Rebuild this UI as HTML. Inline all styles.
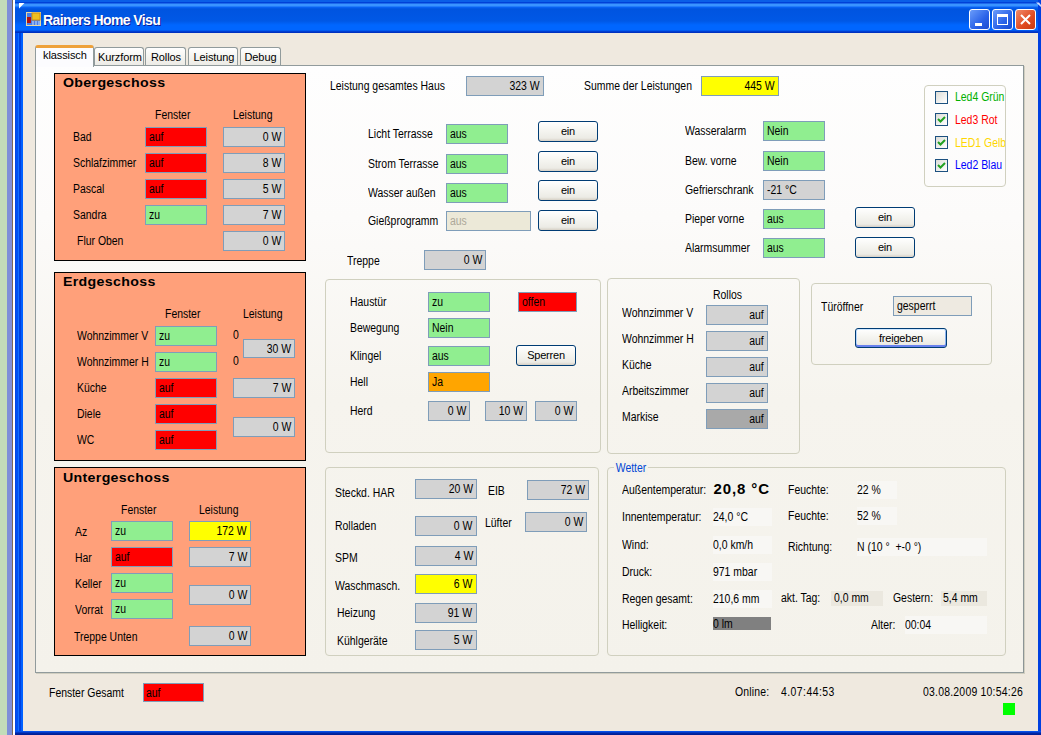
<!DOCTYPE html>
<html><head><meta charset="utf-8"><title>Rainers Home Visu</title>
<style>
*{box-sizing:border-box}
html,body{margin:0;padding:0}
body{width:1041px;height:735px;overflow:hidden;position:relative;background:#c3dcb9;font-family:"Liberation Sans",sans-serif;font-size:11px;color:#000}
.desk1{position:absolute;left:7px;top:0;width:5px;height:735px;background:#7f8fd8}
.desk2{position:absolute;left:12px;top:0;width:1px;height:735px;background:#7a6a5a}
.desk3{position:absolute;left:13px;top:0;width:2px;height:735px;background:#fff}
.frame{position:absolute;left:15px;top:0;width:1026px;height:735px;background:linear-gradient(90deg,#0040e0 0,#0050f0 1px,#0050f0 3px,#1070ff 3px,#1070ff 4px,#0040e0 4px,#0040e0 6px,#0060ff 6px,#0060ff 8px,transparent 8px)}
.frameR{position:absolute;left:1038px;top:0;width:3px;height:735px;background:#0040e0}
.title{position:absolute;left:15px;top:0;width:1026px;height:33px;background:linear-gradient(180deg,#0a5ee8 0,#0a5ee8 2px,#0040d8 2px,#0040d8 3px,#3a93ff 4px,#3a93ff 6px,#0a64f8 7px,#0054e0 9px,#0058e6 21px,#0066ff 25px,#0066ff 30px,#0030c0 32px,#0030c0 33px)}
.content{position:absolute;left:23px;top:33px;width:1015px;height:698px;background:#efe9df}
.bottom{position:absolute;left:15px;top:731px;width:1026px;height:4px;background:linear-gradient(180deg,#0858f0 0,#0848e0 1px,#0028a8 2px,#001c90 4px)}
.ttxt{position:absolute;left:43px;top:12px;font-size:14px;line-height:17px;font-weight:bold;color:#fff;letter-spacing:-0.6px;text-shadow:1px 1px 0 #0a1e9a}
.tabpage{position:absolute;left:35px;top:65px;width:989px;height:608px;border:1px solid #919b9c;border-right-color:#8c9596;background:linear-gradient(180deg,#fefefe 0,#fcfbfa 25%,#f6f4ee 55%,#f4f2eb 100%);box-shadow:1px 1px 0 #d0cec0}
.tab{position:absolute;border:1px solid #919b9c;border-bottom:none;border-radius:3px 3px 0 0;background:linear-gradient(180deg,#fff 0,#f4f3ee 60%,#ecebe6 100%);font-size:11px;line-height:14px;white-space:nowrap;letter-spacing:-0.1px}
.tab.sel{background:#fcfcfe;border-top:3px solid #f5b041;border-color:#eea13a #919b9c #919b9c #919b9c;z-index:3}
.pnl{position:absolute;background:#ffa07a;border:1px solid #000}
.ttl{position:absolute;font-size:13px;font-weight:bold;letter-spacing:0.3px;white-space:nowrap;line-height:16px;transform:scaleX(1.09);transform-origin:0 0}
.l{position:absolute;white-space:nowrap;line-height:14px;font-size:12px;transform:scaleX(0.87);transform-origin:0 0}
.tb{position:absolute;border:1px solid #7f9db9;white-space:nowrap;overflow:hidden}
.tb span{position:absolute;left:2.5px;top:2px;font-size:12px;line-height:14px;transform:scaleX(0.87);transform-origin:0 0}
.tb.r span{left:auto;right:3px;transform-origin:100% 0}
.btn{position:absolute;border:1px solid #003c74;border-radius:3px;background:linear-gradient(180deg,#fff 0,#f6f6f2 40%,#ecebe5 85%,#d6d0c5 100%);text-align:center;line-height:19px;white-space:nowrap;letter-spacing:-0.2px}
.btn.def{box-shadow:inset 0 1px 0 #cee7ff,inset 0 -2px 0 #6982ee,inset 1px 0 0 #b8d7fd,inset -1px 0 0 #8cb4f2;line-height:18px}
.grp{position:absolute;border:1px solid #d0d0bf;border-radius:4px}
.cb{position:absolute;width:13px;height:13px;border:1px solid #1c5180;background:linear-gradient(135deg,#dcdcd7,#fff);padding:0}
.cb svg{position:absolute;left:0;top:0}
.vb{position:absolute}
.big{position:absolute;font-size:15px;font-weight:bold;letter-spacing:0.9px;white-space:nowrap;line-height:18px}
</style></head><body>
<div class="desk1"></div><div class="desk2"></div><div class="desk3"></div>
<div class="frame"></div>
<div class="title"></div>
<div class="frameR"></div>
<div class="content"></div>
<div class="bottom"></div>
<svg style="position:absolute;left:19px;top:3px" width="6" height="6"><path d="M0 0 H5.5 L0 5.5 Z" fill="#fff"/></svg>
<svg style="position:absolute;left:1036px;top:2px" width="5" height="6"><path d="M0 0.5 L3 0.5 L5 3 L5 5 Z" fill="#cfe0ff"/></svg>
<svg style="position:absolute;left:26px;top:12px" width="15" height="14" viewBox="0 0 15 14">
<rect x="0" y="0" width="15" height="14" fill="#4a7ee8"/>
<rect x="0.5" y="0.5" width="14" height="13" fill="none" stroke="#e8d8a0" stroke-width="1"/>
<rect x="6" y="1" width="8" height="7" fill="#f0c020" stroke="#d09010"/>
<rect x="1" y="5" width="4" height="6" fill="#b01010"/>
<rect x="6" y="9" width="2" height="4" fill="#8ab0f0"/><rect x="9" y="9" width="2" height="4" fill="#8ab0f0"/><rect x="12" y="9" width="2" height="4" fill="#8ab0f0"/>
</svg>
<div class="ttxt">Rainers Home Visu</div>
<div style="position:absolute;left:969px;top:9px;width:21px;height:21px;border:1px solid #fff;border-radius:3px;background:linear-gradient(135deg,#6a9cfa,#2a62e8 60%,#1a4ad0)"><div style="position:absolute;left:5px;top:13px;width:7px;height:3px;background:#fff"></div></div>
<div style="position:absolute;left:992px;top:9px;width:21px;height:21px;border:1px solid #fff;border-radius:3px;background:linear-gradient(135deg,#6a9cfa,#2a62e8 60%,#1a4ad0)"><div style="position:absolute;left:4px;top:4px;width:11px;height:11px;border:1px solid #fff;border-top-width:3px"></div></div>
<div style="position:absolute;left:1015px;top:9px;width:21px;height:21px;border:1px solid #fff;border-radius:3px;background:linear-gradient(135deg,#f08a6a,#e04a20 60%,#c83a10)"><svg style="position:absolute;left:0;top:0" width="19" height="19"><path d="M5 5 L14 14 M14 5 L5 14" stroke="#fff" stroke-width="2"/></svg></div>

<div class="tabpage"></div>
<div class="tab sel" style="left:35px;top:45px;width:59px;height:22px"><span style="position:absolute;left:7px;top:-0.5px">klassisch</span></div>
<div class="tab" style="left:94px;top:47px;width:50px;height:18px"><span style="position:absolute;left:3px;top:2px">Kurzform</span></div>
<div class="tab" style="left:145px;top:47px;width:41px;height:18px"><span style="position:absolute;left:5px;top:2px">Rollos</span></div>
<div class="tab" style="left:188px;top:47px;width:50px;height:18px"><span style="position:absolute;left:4.5px;top:2px">Leistung</span></div>
<div class="tab" style="left:240px;top:47px;width:41px;height:18px"><span style="position:absolute;left:3.5px;top:2px">Debug</span></div>

<div class="pnl" style="left:54px;top:73px;width:252px;height:188px"></div>
<div class="ttl" style="left:62.5px;top:75px">Obergeschoss</div>
<div class="l" style="left:155.2px;top:108.1px;">Fenster</div>
<div class="l" style="left:233.2px;top:108.1px;">Leistung</div>
<div class="l" style="left:73.2px;top:130.1px;">Bad</div>
<div class="tb" style="left:145px;top:127px;width:62px;height:20px;background:#ff0000;color:#000;"><span>auf</span></div>
<div class="tb r" style="left:223px;top:127px;width:62px;height:20px;background:#d3d3d3;color:#000;"><span>0 W</span></div>
<div class="l" style="left:73.2px;top:156.1px;">Schlafzimmer</div>
<div class="tb" style="left:145px;top:153px;width:62px;height:20px;background:#ff0000;color:#000;"><span>auf</span></div>
<div class="tb r" style="left:223px;top:153px;width:62px;height:20px;background:#d3d3d3;color:#000;"><span>8 W</span></div>
<div class="l" style="left:73.2px;top:182.1px;">Pascal</div>
<div class="tb" style="left:145px;top:179px;width:62px;height:20px;background:#ff0000;color:#000;"><span>auf</span></div>
<div class="tb r" style="left:223px;top:179px;width:62px;height:20px;background:#d3d3d3;color:#000;"><span>5 W</span></div>
<div class="l" style="left:73.2px;top:208.1px;">Sandra</div>
<div class="tb" style="left:145px;top:205px;width:62px;height:20px;background:#90ee90;color:#000;"><span>zu</span></div>
<div class="tb r" style="left:223px;top:205px;width:62px;height:20px;background:#d3d3d3;color:#000;"><span>7 W</span></div>
<div class="l" style="left:77.2px;top:234.1px;">Flur Oben</div>
<div class="tb r" style="left:223px;top:231px;width:62px;height:20px;background:#d3d3d3;color:#000;"><span>0 W</span></div>
<div class="pnl" style="left:54px;top:272px;width:252px;height:189px"></div>
<div class="ttl" style="left:62.5px;top:274px">Erdgeschoss</div>
<div class="l" style="left:164.7px;top:306.6px;">Fenster</div>
<div class="l" style="left:242.7px;top:306.6px;">Leistung</div>
<div class="l" style="left:76.7px;top:329.1px;">Wohnzimmer V</div>
<div class="tb" style="left:155px;top:326px;width:62px;height:20px;background:#90ee90;color:#000;"><span>zu</span></div>
<div class="l" style="left:76.7px;top:355.1px;">Wohnzimmer H</div>
<div class="tb" style="left:155px;top:352px;width:62px;height:20px;background:#90ee90;color:#000;"><span>zu</span></div>
<div class="l" style="left:76.7px;top:381.1px;">K&uuml;che</div>
<div class="tb" style="left:155px;top:378px;width:62px;height:20px;background:#ff0000;color:#000;"><span>auf</span></div>
<div class="l" style="left:76.7px;top:407.1px;">Diele</div>
<div class="tb" style="left:155px;top:404px;width:62px;height:20px;background:#ff0000;color:#000;"><span>auf</span></div>
<div class="l" style="left:76.7px;top:433.1px;">WC</div>
<div class="tb" style="left:155px;top:430px;width:62px;height:20px;background:#ff0000;color:#000;"><span>auf</span></div>
<div class="l" style="left:232.7px;top:328.1px;">0</div>
<div class="l" style="left:232.7px;top:353.6px;">0</div>
<div class="tb r" style="left:243px;top:339px;width:52px;height:19px;background:#d3d3d3;color:#000;"><span>30 W</span></div>
<div class="tb r" style="left:233px;top:378px;width:62px;height:20px;background:#d3d3d3;color:#000;"><span>7 W</span></div>
<div class="tb r" style="left:233px;top:417px;width:62px;height:20px;background:#d3d3d3;color:#000;"><span>0 W</span></div>
<div class="pnl" style="left:54px;top:467px;width:252px;height:189px"></div>
<div class="ttl" style="left:62.5px;top:469.5px">Untergeschoss</div>
<div class="l" style="left:121.2px;top:502.6px;">Fenster</div>
<div class="l" style="left:198.7px;top:502.6px;">Leistung</div>
<div class="l" style="left:75.2px;top:525.1px;">Az</div>
<div class="tb" style="left:111px;top:521px;width:62px;height:20px;background:#90ee90;color:#000;"><span>zu</span></div>
<div class="l" style="left:75.2px;top:551.1px;">Har</div>
<div class="tb" style="left:111px;top:547px;width:62px;height:20px;background:#ff0000;color:#000;"><span>auf</span></div>
<div class="l" style="left:75.2px;top:577.1px;">Keller</div>
<div class="tb" style="left:111px;top:573px;width:62px;height:20px;background:#90ee90;color:#000;"><span>zu</span></div>
<div class="l" style="left:75.2px;top:603.1px;">Vorrat</div>
<div class="tb" style="left:111px;top:599px;width:62px;height:20px;background:#90ee90;color:#000;"><span>zu</span></div>
<div class="tb r" style="left:189px;top:521px;width:62px;height:20px;background:#ffff00;color:#000;"><span>172 W</span></div>
<div class="tb r" style="left:189px;top:547px;width:62px;height:20px;background:#d3d3d3;color:#000;"><span>7 W</span></div>
<div class="tb r" style="left:189px;top:585px;width:62px;height:20px;background:#d3d3d3;color:#000;"><span>0 W</span></div>
<div class="l" style="left:73.7px;top:630.1px;">Treppe Unten</div>
<div class="tb r" style="left:189px;top:626px;width:62px;height:20px;background:#d3d3d3;color:#000;"><span>0 W</span></div>
<div class="l" style="left:329.7px;top:79.1px;">Leistung gesamtes Haus</div>
<div class="tb r" style="left:466px;top:76px;width:78px;height:20px;background:#d3d3d3;color:#000;"><span>323 W</span></div>
<div class="l" style="left:583.7px;top:79.1px;">Summe der Leistungen</div>
<div class="tb r" style="left:701px;top:76px;width:78px;height:20px;background:#ffff00;color:#000;"><span>445 W</span></div>
<div class="l" style="left:367.7px;top:127.1px;">Licht Terrasse</div>
<div class="tb" style="left:446px;top:124px;width:62px;height:20px;background:#90ee90;color:#000;"><span>aus</span></div>
<div class="btn" style="left:538px;top:121px;width:60px;height:21px">ein</div>
<div class="l" style="left:367.7px;top:157.1px;">Strom Terrasse</div>
<div class="tb" style="left:446px;top:154px;width:62px;height:20px;background:#90ee90;color:#000;"><span>aus</span></div>
<div class="btn" style="left:538px;top:151px;width:60px;height:21px">ein</div>
<div class="l" style="left:367.7px;top:186.1px;">Wasser au&szlig;en</div>
<div class="tb" style="left:446px;top:183px;width:62px;height:20px;background:#90ee90;color:#000;"><span>aus</span></div>
<div class="btn" style="left:538px;top:180px;width:60px;height:21px">ein</div>
<div class="l" style="left:367.7px;top:214.1px;">Gie&szlig;programm</div>
<div class="tb" style="left:446px;top:211px;width:85px;height:20px;background:#ece9d8;color:#aca899;"><span>aus</span></div>
<div class="btn" style="left:538px;top:210px;width:60px;height:21px">ein</div>
<div class="l" style="left:346.7px;top:253.6px;">Treppe</div>
<div class="tb r" style="left:424px;top:250px;width:62px;height:20px;background:#d3d3d3;color:#000;"><span>0 W</span></div>
<div class="l" style="left:684.7px;top:124.1px;">Wasseralarm</div>
<div class="tb" style="left:763px;top:121px;width:62px;height:20px;background:#90ee90;color:#000;"><span>Nein</span></div>
<div class="l" style="left:684.7px;top:154.1px;">Bew. vorne</div>
<div class="tb" style="left:763px;top:151px;width:62px;height:20px;background:#90ee90;color:#000;"><span>Nein</span></div>
<div class="l" style="left:684.7px;top:183.1px;">Gefrierschrank</div>
<div class="tb" style="left:763px;top:180px;width:62px;height:20px;background:#d3d3d3;color:#000;"><span>-21 &deg;C</span></div>
<div class="l" style="left:684.7px;top:212.1px;">Pieper vorne</div>
<div class="tb" style="left:763px;top:209px;width:62px;height:20px;background:#90ee90;color:#000;"><span>aus</span></div>
<div class="l" style="left:684.7px;top:241.1px;">Alarmsummer</div>
<div class="tb" style="left:763px;top:238px;width:62px;height:20px;background:#90ee90;color:#000;"><span>aus</span></div>
<div class="btn" style="left:855px;top:207px;width:60px;height:21px">ein</div>
<div class="btn" style="left:855px;top:237px;width:60px;height:21px">ein</div>
<div class="grp" style="left:924px;top:85px;width:82px;height:102px;overflow:hidden"></div>
<div style="position:absolute;left:925px;top:86px;width:80px;height:99px;overflow:hidden">
<div class="cb" style="left:10px;top:4.5px"></div>
<div class="l" style="left:29.5px;top:4.0px;color:#00b000">Led4 Gr&uuml;n</div>
<div class="cb" style="left:10px;top:27.299999999999997px"><svg width="11" height="11" viewBox="0 0 11 11"><path d="M2 5 L4.5 7.5 L9 3" stroke="#21a121" stroke-width="2" fill="none"/></svg></div>
<div class="l" style="left:29.5px;top:26.799999999999997px;color:#ff0000">Led3 Rot</div>
<div class="cb" style="left:10px;top:50.099999999999994px"><svg width="11" height="11" viewBox="0 0 11 11"><path d="M2 5 L4.5 7.5 L9 3" stroke="#21a121" stroke-width="2" fill="none"/></svg></div>
<div class="l" style="left:29.5px;top:49.599999999999994px;color:#ffd700">LED1 Gelb</div>
<div class="cb" style="left:10px;top:72.9px"><svg width="11" height="11" viewBox="0 0 11 11"><path d="M2 5 L4.5 7.5 L9 3" stroke="#21a121" stroke-width="2" fill="none"/></svg></div>
<div class="l" style="left:29.5px;top:72.4px;color:#0000ff">Led2 Blau</div>
</div>
<div class="grp" style="left:325px;top:279px;width:276px;height:174px;"></div>
<div class="l" style="left:350.2px;top:295.1px;">Haust&uuml;r</div>
<div class="tb" style="left:428px;top:292px;width:62px;height:20px;background:#90ee90;color:#000;"><span>zu</span></div>
<div class="tb" style="left:518px;top:292px;width:59px;height:20px;background:#ff0000;color:#000;"><span>offen</span></div>
<div class="l" style="left:350.2px;top:321.1px;">Bewegung</div>
<div class="tb" style="left:428px;top:318px;width:62px;height:20px;background:#90ee90;color:#000;"><span>Nein</span></div>
<div class="l" style="left:350.2px;top:348.6px;">Klingel</div>
<div class="tb" style="left:428px;top:346px;width:62px;height:20px;background:#90ee90;color:#000;"><span>aus</span></div>
<div class="btn" style="left:516px;top:345px;width:60px;height:21px">Sperren</div>
<div class="l" style="left:350.2px;top:375.1px;">Hell</div>
<div class="tb" style="left:428px;top:372px;width:62px;height:20px;background:#ffa500;color:#000;"><span>Ja</span></div>
<div class="l" style="left:350.2px;top:403.6px;">Herd</div>
<div class="tb r" style="left:428px;top:401px;width:42px;height:20px;background:#d3d3d3;color:#000;"><span>0 W</span></div>
<div class="tb r" style="left:485px;top:401px;width:42px;height:20px;background:#d3d3d3;color:#000;"><span>10 W</span></div>
<div class="tb r" style="left:535px;top:401px;width:42px;height:20px;background:#d3d3d3;color:#000;"><span>0 W</span></div>
<div class="grp" style="left:607px;top:278px;width:193px;height:176px;"></div>
<div class="l" style="left:713.2px;top:288.1px;">Rollos</div>
<div class="l" style="left:621.7px;top:305.6px;">Wohnzimmer V</div>
<div class="tb r" style="left:706px;top:305px;width:62px;height:20px;background:#d3d3d3;color:#000;"><span>auf</span></div>
<div class="l" style="left:621.7px;top:331.6px;">Wohnzimmer H</div>
<div class="tb r" style="left:706px;top:331px;width:62px;height:20px;background:#d3d3d3;color:#000;"><span>auf</span></div>
<div class="l" style="left:621.7px;top:357.6px;">K&uuml;che</div>
<div class="tb r" style="left:706px;top:357px;width:62px;height:20px;background:#d3d3d3;color:#000;"><span>auf</span></div>
<div class="l" style="left:621.7px;top:383.6px;">Arbeitszimmer</div>
<div class="tb r" style="left:706px;top:383px;width:62px;height:20px;background:#d3d3d3;color:#000;"><span>auf</span></div>
<div class="l" style="left:621.7px;top:409.6px;">Markise</div>
<div class="tb r" style="left:706px;top:409px;width:62px;height:20px;background:#a9a9a9;color:#000;"><span>auf</span></div>
<div class="grp" style="left:811px;top:283px;width:181px;height:82px;"></div>
<div class="l" style="left:820.7px;top:299.6px;">T&uuml;r&ouml;ffner</div>
<div class="tb" style="left:893px;top:296px;width:79px;height:20px;background:#eeeae1;color:#000;"><span>gesperrt</span></div>
<div class="btn def" style="left:855px;top:328px;width:92px;height:20px">freigeben</div>
<div class="grp" style="left:325px;top:467px;width:274px;height:189px;"></div>
<div class="l" style="left:334.7px;top:485.6px;">Steckd. HAR</div>
<div class="tb r" style="left:415px;top:479px;width:62px;height:20px;background:#d3d3d3;color:#000;"><span>20 W</span></div>
<div class="l" style="left:487.7px;top:484.1px;">EIB</div>
<div class="tb r" style="left:527px;top:480px;width:62px;height:20px;background:#d3d3d3;color:#000;"><span>72 W</span></div>
<div class="l" style="left:334.7px;top:519.1px;">Rolladen</div>
<div class="tb r" style="left:414.5px;top:516px;width:62px;height:20px;background:#d3d3d3;color:#000;"><span>0 W</span></div>
<div class="l" style="left:484.7px;top:516.1px;">L&uuml;fter</div>
<div class="tb r" style="left:525px;top:512px;width:62px;height:20px;background:#d3d3d3;color:#000;"><span>0 W</span></div>
<div class="l" style="left:334.7px;top:550.6px;">SPM</div>
<div class="tb r" style="left:415px;top:546px;width:62px;height:20px;background:#d3d3d3;color:#000;"><span>4 W</span></div>
<div class="l" style="left:334.7px;top:578.6px;">Waschmasch.</div>
<div class="tb r" style="left:414.5px;top:573.5px;width:62px;height:20px;background:#ffff00;color:#000;"><span>6 W</span></div>
<div class="l" style="left:337.2px;top:606.1px;">Heizung</div>
<div class="tb r" style="left:414.5px;top:603px;width:62px;height:20px;background:#d3d3d3;color:#000;"><span>91 W</span></div>
<div class="l" style="left:337.2px;top:633.6px;">K&uuml;hlger&auml;te</div>
<div class="tb r" style="left:414.5px;top:630px;width:62px;height:20px;background:#d3d3d3;color:#000;"><span>5 W</span></div>
<div class="grp" style="left:607px;top:467px;width:399px;height:189px;"></div>
<div class="l" style="left:614px;top:461px;color:#0046d5;background:#f4f2ec;padding:0 2px">Wetter</div>
<div class="l" style="left:621.7px;top:483.1px;">Au&szlig;entemperatur:</div>
<div class="big" style="left:713.5px;top:480px">20,8 &deg;C</div>
<div class="l" style="left:788.2px;top:483.1px;">Feuchte:</div>
<div class="vb" style="left:856.5px;top:481px;width:40px;height:18px;background:#f8f7f4"></div>
<div class="l" style="left:857.2px;top:483.1px;">22 %</div>
<div class="l" style="left:621.7px;top:510.1px;">Innentemperatur:</div>
<div class="vb" style="left:712.5px;top:508px;width:59px;height:18px;background:#f8f7f4"></div>
<div class="l" style="left:713.2px;top:510.1px;">24,0 &deg;C</div>
<div class="l" style="left:788.2px;top:508.6px;">Feuchte:</div>
<div class="vb" style="left:856.5px;top:506.5px;width:40px;height:18px;background:#f8f7f4"></div>
<div class="l" style="left:857.2px;top:508.6px;">52 %</div>
<div class="l" style="left:621.7px;top:537.6px;">Wind:</div>
<div class="vb" style="left:712.5px;top:535.5px;width:59px;height:18px;background:#f8f7f4"></div>
<div class="l" style="left:713.2px;top:537.6px;">0,0 km/h</div>
<div class="l" style="left:788.2px;top:540.1px;">Richtung:</div>
<div class="vb" style="left:856.5px;top:538px;width:130px;height:18px;background:#f8f7f4"></div>
<div class="l" style="left:857.2px;top:540.1px;">N (10 &deg;&nbsp; +-0 &deg;)</div>
<div class="l" style="left:621.7px;top:564.6px;">Druck:</div>
<div class="vb" style="left:712.5px;top:562.5px;width:59px;height:18px;background:#f8f7f4"></div>
<div class="l" style="left:713.2px;top:564.6px;">971 mbar</div>
<div class="l" style="left:621.7px;top:591.6px;">Regen gesamt:</div>
<div class="vb" style="left:712.5px;top:589.5px;width:59px;height:18px;background:#f8f7f4"></div>
<div class="l" style="left:713.2px;top:591.6px;">210,6 mm</div>
<div class="l" style="left:781.2px;top:591.1px;">akt. Tag:</div>
<div class="vb" style="left:831px;top:591px;width:52px;height:15px;background:#ebe8df"></div>
<div class="l" style="left:834.2px;top:591.1px;">0,0 mm</div>
<div class="l" style="left:893.2px;top:591.1px;">Gestern:</div>
<div class="vb" style="left:941px;top:591px;width:46px;height:15px;background:#ebe8df"></div>
<div class="l" style="left:943.2px;top:591.1px;">5,4 mm</div>
<div class="l" style="left:621.7px;top:617.6px;">Helligkeit:</div>
<div class="vb" style="left:713px;top:617px;width:58px;height:13px;background:#808080"></div>
<div class="l" style="left:713.2px;top:616.6px;">0 lm</div>
<div class="l" style="left:870.7px;top:617.6px;">Alter:</div>
<div class="vb" style="left:904.5px;top:615.5px;width:82px;height:18px;background:#f8f7f4"></div>
<div class="l" style="left:905.2px;top:617.6px;">00:04</div>
<div class="l" style="left:49.2px;top:685.6px;">Fenster Gesamt</div>
<div class="tb" style="left:142.5px;top:682.5px;width:61px;height:19px;background:#ff0000;color:#000;"><span>auf</span></div>
<div class="l" style="left:735.2px;top:685.3000000000001px;letter-spacing:0.2px">Online:</div>
<div class="l" style="left:780.7px;top:685.3000000000001px;letter-spacing:0.5px">4.07:44:53</div>
<div class="l" style="left:923.2px;top:685.3000000000001px;letter-spacing:0.25px">03.08.2009 10:54:26</div>
<div style="position:absolute;left:1003px;top:703px;width:12px;height:12px;background:#00ff00"></div>
</body></html>
